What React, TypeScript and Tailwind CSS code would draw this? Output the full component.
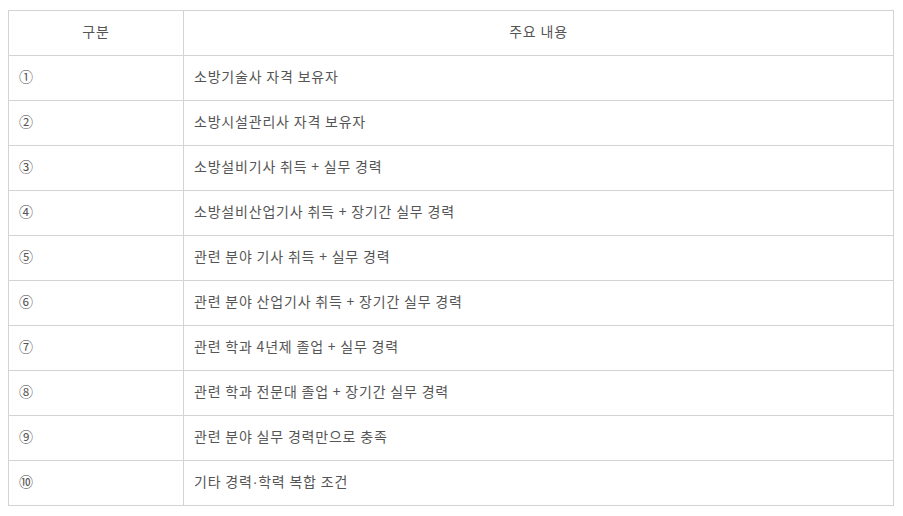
import type { ReactNode } from 'react';

const dot = <span style={{ fontFamily: '"Liberation Sans", sans-serif' }}>·</span>;

const rows: [string, ReactNode][] = [
  ['①', '소방기술사 자격 보유자'],
  ['②', '소방시설관리사 자격 보유자'],
  ['③', '소방설비기사 취득 + 실무 경력'],
  ['④', '소방설비산업기사 취득 + 장기간 실무 경력'],
  ['⑤', '관련 분야 기사 취득 + 실무 경력'],
  ['⑥', '관련 분야 산업기사 취득 + 장기간 실무 경력'],
  ['⑦', '관련 학과 4년제 졸업 + 실무 경력'],
  ['⑧', '관련 학과 전문대 졸업 + 장기간 실무 경력'],
  ['⑨', '관련 분야 실무 경력만으로 충족'],
  ['⑩', <>기타 경력{dot}학력 복합 조건</>],
];

export default function App() {
  return (
    <div
      className="bg-white w-[903px] h-[516px] pl-2 pt-[10px] text-[14px] tracking-[0.8px] text-[#555]"
      style={{ fontFamily: '"Noto Sans CJK KR", "Noto Sans", sans-serif' }}
    >
      <table className="w-[886px] border-collapse border border-[#d3d3d3] table-fixed">
        <colgroup>
          <col className="w-[175px]" />
          <col />
        </colgroup>
        <thead>
          <tr className="h-[45px]">
            <th className="border border-[#d3d3d3] font-normal text-center px-[10px] pb-[3px]">구분</th>
            <th className="border border-[#d3d3d3] font-normal text-center px-[10px] pb-[3px]">주요 내용</th>
          </tr>
        </thead>
        <tbody>
          {rows.map(([no, text]) => (
            <tr key={no} className="h-[45px]">
              <td className="border border-[#d3d3d3] px-[10px] pb-[3px]">{no}</td>
              <td className="border border-[#d3d3d3] px-[10px] pb-[3px]">{text}</td>
            </tr>
          ))}
        </tbody>
      </table>
    </div>
  );
}
